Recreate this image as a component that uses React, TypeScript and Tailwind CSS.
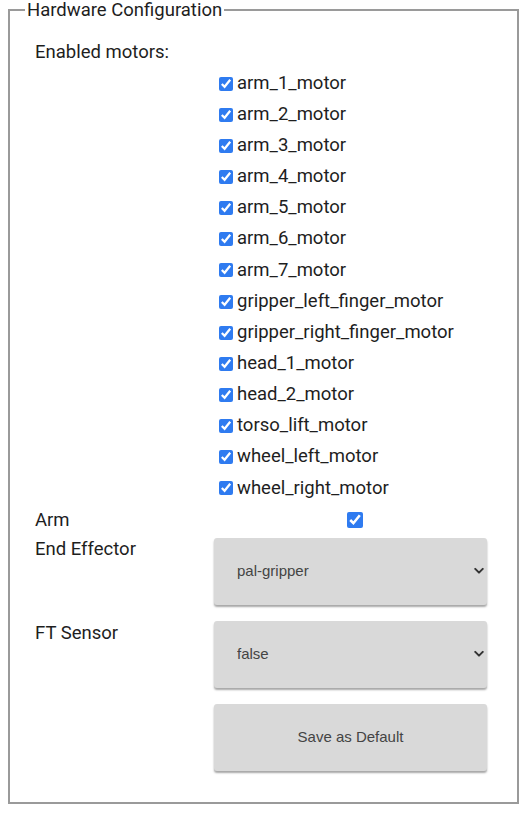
import { useState } from 'react'

const MOTORS = [
  'arm_1_motor',
  'arm_2_motor',
  'arm_3_motor',
  'arm_4_motor',
  'arm_5_motor',
  'arm_6_motor',
  'arm_7_motor',
  'gripper_left_finger_motor',
  'gripper_right_finger_motor',
  'head_1_motor',
  'head_2_motor',
  'torso_lift_motor',
  'wheel_left_motor',
  'wheel_right_motor',
]

function Chevron() {
  return (
    <svg viewBox="0 0 12 8" className="pointer-events-none absolute right-[3px] top-1/2 h-[7px] w-[10px] -translate-y-1/2">
      <path d="M1.5 1.5 L6 6 L10.5 1.5" fill="none" stroke="#333" strokeWidth="2.4" strokeLinecap="round" strokeLinejoin="round" />
    </svg>
  )
}

function GraySelect({ value, options }: { value: string; options: string[] }) {
  const [v, setV] = useState(value)
  return (
    <div className="relative h-[67px] w-[273px]">
      <select
        value={v}
        onChange={(e) => setV(e.target.value)}
        className="h-full w-full appearance-none rounded-[3px] bg-[#d9d9d9] pl-[23px] pr-8 text-[15px] text-[#444] shadow-[0_2px_2px_rgba(0,0,0,0.35)] outline-none"
        style={{ fontFamily: '"Liberation Sans", Arial, sans-serif' }}
      >
        {options.map((o) => (
          <option key={o} value={o}>
            {o}
          </option>
        ))}
      </select>
      <Chevron />
    </div>
  )
}

export default function App() {
  const [enabled, setEnabled] = useState<Record<string, boolean>>(
    Object.fromEntries(MOTORS.map((m) => [m, true]))
  )
  const [arm, setArm] = useState(true)

  return (
    <div className="h-[814px] w-[532px] bg-white text-[#1e1e1e]" style={{ fontFamily: 'Roboto, "Noto Sans", sans-serif' }}>
      <fieldset className="ml-2 h-[804px] w-[511px] border-2 border-[#9a9a9a] px-[15px]">
        <legend className="px-[2px] text-[18.5px] leading-[20px]">Hardware Configuration</legend>

        <div className="grid grid-cols-[179px_273px] pl-[10px] pt-[17px]">
          {/* Enabled motors */}
          <div className="col-span-2 flex h-[31px] items-center text-[18.5px]">Enabled motors:</div>
          <div />
          <div className="flex flex-col">
            {MOTORS.map((m) => (
              <label key={m} className="flex h-[31.15px] items-center gap-[4px] pl-[5px] text-[18.5px]">
                <input
                  type="checkbox"
                  checked={enabled[m]}
                  onChange={(e) => setEnabled({ ...enabled, [m]: e.target.checked })}
                  className="m-0 h-[14px] w-[14px] accent-[#2f7bf0]"
                />
                {m}
              </label>
            ))}
          </div>

          {/* Arm */}
          <div className="flex h-[33px] items-center text-[18.5px]">Arm</div>
          <div className="flex h-[33px] items-center justify-center pl-[8px]">
            <input
              type="checkbox"
              checked={arm}
              onChange={(e) => setArm(e.target.checked)}
              className="m-0 h-[16px] w-[16px] accent-[#2f7bf0]"
            />
          </div>

          {/* End effector */}
          <div className="pt-[2px] text-[18.5px] leading-[20px]">End Effector</div>
          <div className="pt-[1px]">
            <GraySelect value="pal-gripper" options={['pal-gripper', 'pal-hey5', 'schunk-wsg', 'no-end-effector']} />
          </div>

          {/* FT sensor */}
          <div className="pt-[18px] text-[18.5px] leading-[20px]">FT Sensor</div>
          <div className="pt-[16px]">
            <GraySelect value="false" options={['false', 'schunk-ft']} />
          </div>

          <div />
          <div className="pt-[16px]">
            <button
              className="h-[67px] w-[273px] rounded-[3px] bg-[#d9d9d9] text-[15px] text-[#444] shadow-[0_2px_2px_rgba(0,0,0,0.35)]"
              style={{ fontFamily: '"Liberation Sans", Arial, sans-serif' }}
            >
              Save as Default
            </button>
          </div>
        </div>
      </fieldset>
    </div>
  )
}
